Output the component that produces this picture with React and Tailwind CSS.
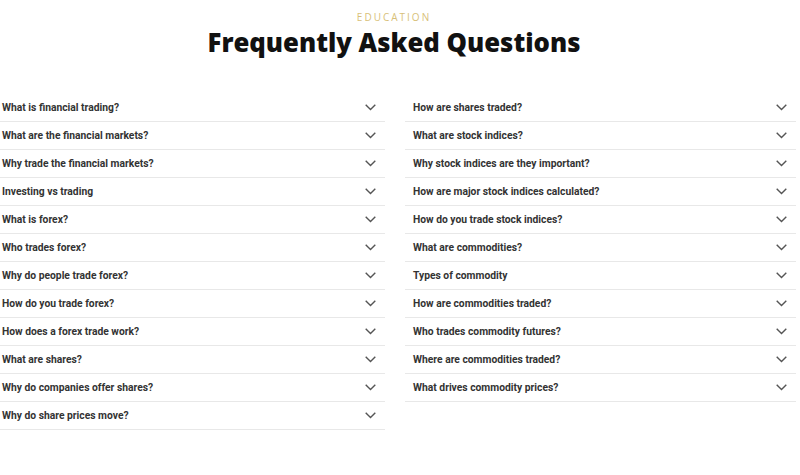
const left = [
  "What is financial trading?",
  "What are the financial markets?",
  "Why trade the financial markets?",
  "Investing vs trading",
  "What is forex?",
  "Who trades forex?",
  "Why do people trade forex?",
  "How do you trade forex?",
  "How does a forex trade work?",
  "What are shares?",
  "Why do companies offer shares?",
  "Why do share prices move?",
];

const right = [
  "How are shares traded?",
  "What are stock indices?",
  "Why stock indices are they important?",
  "How are major stock indices calculated?",
  "How do you trade stock indices?",
  "What are commodities?",
  "Types of commodity",
  "How are commodities traded?",
  "Who trades commodity futures?",
  "Where are commodities traded?",
  "What drives commodity prices?",
];

const Chevron = () => (
  <svg className="w-[11px] h-[7px] text-[#555]" viewBox="0 0 11 7" fill="none" stroke="currentColor" strokeWidth="1.4">
    <polyline points="0.7,0.8 5.5,5.6 10.3,0.8" />
  </svg>
);

const FaqRow = ({ question }) => (
  <div className="flex items-center justify-between h-[28px] border-b border-[#e8e8e8] pl-[8px] pr-[9px]">
    <span className="text-[10.3px] font-bold text-[#333] font-['Roboto',sans-serif]">{question}</span>
    <Chevron />
  </div>
);

export default function App() {
  return (
    <div className="w-[800px] h-[475px] bg-white overflow-hidden font-['Liberation_Sans',Arial,sans-serif]">
      <div className="w-[788px] pt-[11px] flex flex-col items-center">
        <div className="text-[10px] tracking-[0.2em] text-[#d8bf79] font-['Open_Sans',sans-serif] leading-[12px]">
          EDUCATION
        </div>
        <h1 className="mt-[3px] text-[25.7px] leading-[34px] font-extrabold text-[#111] font-['Open_Sans',sans-serif]">
          Frequently Asked Questions
        </h1>
      </div>
      <div className="mt-[34px] ml-[-6px] w-[802px] flex gap-[20px]">
        <div className="flex-1">
          {left.map((q) => (
            <FaqRow key={q} question={q} />
          ))}
        </div>
        <div className="flex-1">
          {right.map((q) => (
            <FaqRow key={q} question={q} />
          ))}
        </div>
      </div>
    </div>
  );
}
